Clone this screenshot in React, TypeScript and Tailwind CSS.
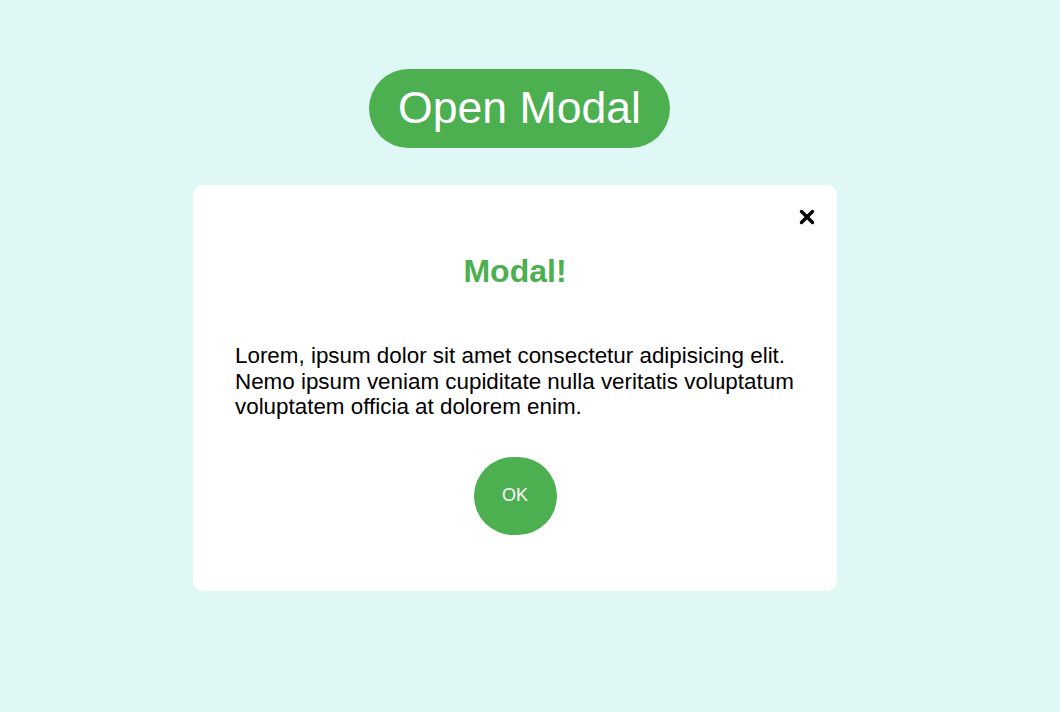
import React from "react";

export default function App() {
  return (
    <div
      className="w-[1060px] h-[712px] bg-[#dff8f5] overflow-hidden"
      style={{ fontFamily: '"Liberation Sans", Arial, sans-serif' }}
    >
      <div className="pt-[69px] pl-[369px]">
        <button className="h-[79px] w-[301px] rounded-full bg-[#4caf50] text-white text-[44.6px] leading-none flex items-center justify-center">
          Open Modal
        </button>
      </div>
      <div className="mt-[37px] ml-[193px] w-[644px] h-[406px] bg-white rounded-[10px] relative flex flex-col items-center">
        <button className="absolute right-[22px] top-[24px] w-[16px] h-[16px] flex items-center justify-center">
          <svg width="16" height="16" viewBox="0 0 16 16">
            <path d="M2.5 2.5 L13.5 13.5 M13.5 2.5 L2.5 13.5" stroke="#000" strokeWidth="3.4" strokeLinecap="round" />
          </svg>
        </button>
        <h2 className="mt-[68px] text-[32px] font-bold text-[#4caf50] leading-[37px]">Modal!</h2>
        <p className="mt-[53px] w-[560px] text-[22.4px] leading-[25.5px] text-black">
          Lorem, ipsum dolor sit amet consectetur adipisicing elit. Nemo ipsum veniam cupiditate nulla veritatis voluptatum voluptatem officia at dolorem enim.
        </p>
        <button className="mt-[37px] w-[83px] h-[78px] rounded-full bg-[#4caf50] text-white text-[18px] flex items-center justify-center">
          OK
        </button>
      </div>
    </div>
  );
}
